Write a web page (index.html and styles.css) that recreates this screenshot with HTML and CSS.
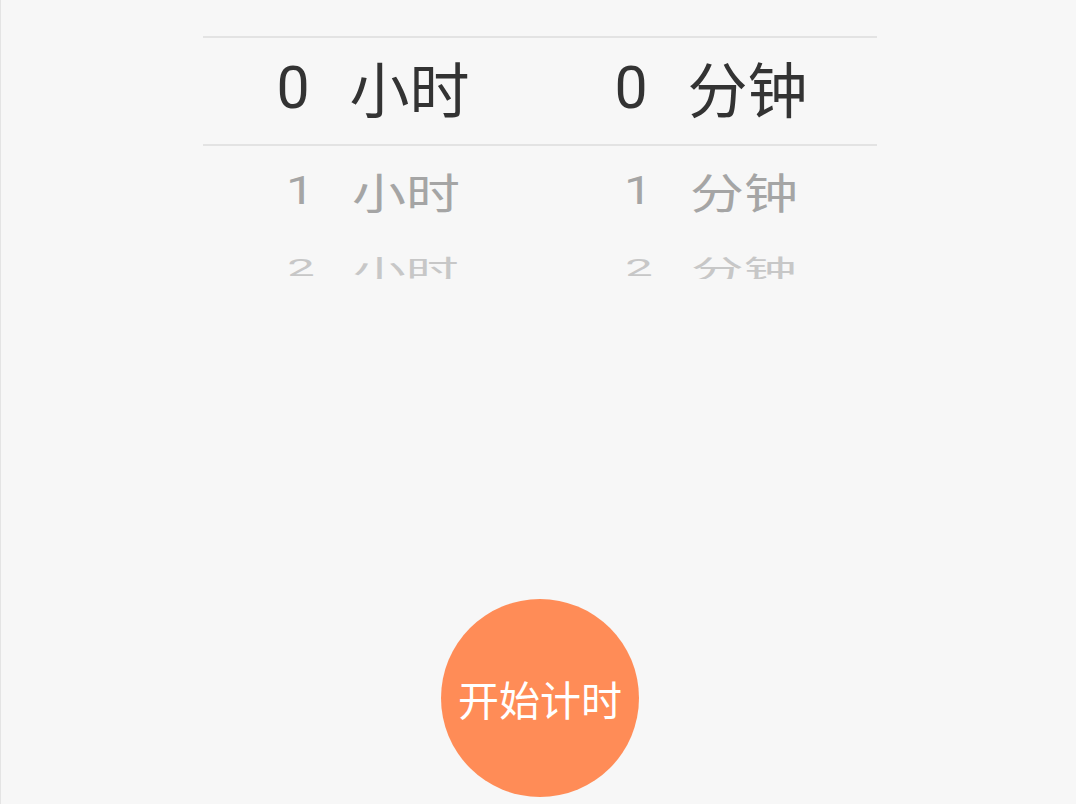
FILE: index.html
```html
<!DOCTYPE html>
<html lang="zh-CN">
<head>
<meta charset="utf-8">
<title>计时器</title>
<link rel="stylesheet" href="styles.css">
</head>
<body>
<div class="screen">
  <div class="wheel">
    <div class="row selected">
      <div class="cell"><span class="num">0</span><span class="unit">小时</span></div>
      <div class="cell"><span class="num">0</span><span class="unit">分钟</span></div>
    </div>
    <div class="row near">
      <div class="cell"><span class="num">1</span><span class="unit">小时</span></div>
      <div class="cell"><span class="num">1</span><span class="unit">分钟</span></div>
    </div>
    <div class="row far">
      <div class="cell"><span class="num">2</span><span class="unit">小时</span></div>
      <div class="cell"><span class="num">2</span><span class="unit">分钟</span></div>
    </div>
  </div>
  <div class="actions">
    <button class="start">开始计时</button>
  </div>
</div>
</body>
</html>
```
FILE: styles.css
```css
html, body {
  margin: 0;
  padding: 0;
  background: #f7f7f7;
}
body {
  font-family: "Noto Sans CJK SC", "Noto Sans", sans-serif;
}
.screen {
  height: 804px;
  box-sizing: border-box;
  border-left: 1px solid #e4e4e4;
  display: flex;
  flex-direction: column;
  align-items: center;
}
.wheel {
  width: 674px;
  margin-top: 36px;
  margin-left: 3px;
  height: 243px;
  overflow: hidden;
}
.row {
  display: flex;
}
.cell {
  flex: 1;
  display: flex;
  align-items: center;
  justify-content: center;
  gap: 40px;
  white-space: nowrap;
  line-height: 1;
}
.num {
  font-family: Roboto, "Noto Sans", sans-serif;
}
.selected {
  height: 106px;
  border-top: 2px solid #e3e3e3;
  border-bottom: 2px solid #e3e3e3;
  color: #333333;
  font-size: 60px;
}
.selected .cell {
  padding-bottom: 8px;
}
.selected .num { font-size: 59px; }
.near {
  height: 90px;
  color: #a5a5a5;
  font-size: 54px;
}
.near .cell {
  transform: scaleY(0.78);
  gap: 38px;
}
.near .num { font-size: 50px; }
.far {
  height: 62px;
  color: #c7c7c7;
  font-size: 53px;
}
.far .cell {
  transform: scaleY(0.5);
  gap: 38px;
}
.far .num { font-size: 49px; }
.row .cell:first-child { padding-left: 4px; }
.row .cell:last-child { padding-left: 6px; }
.actions {
  margin-top: auto;
  margin-bottom: 7px;
  margin-left: 3px;
  display: flex;
  justify-content: center;
}
.start {
  width: 198px;
  height: 198px;
  border-radius: 50%;
  border: none;
  background: #ff8c57;
  color: #ffffff;
  font-family: "Noto Sans CJK SC", "Noto Sans", sans-serif;
  font-size: 41px;
  padding: 0;
}
```
